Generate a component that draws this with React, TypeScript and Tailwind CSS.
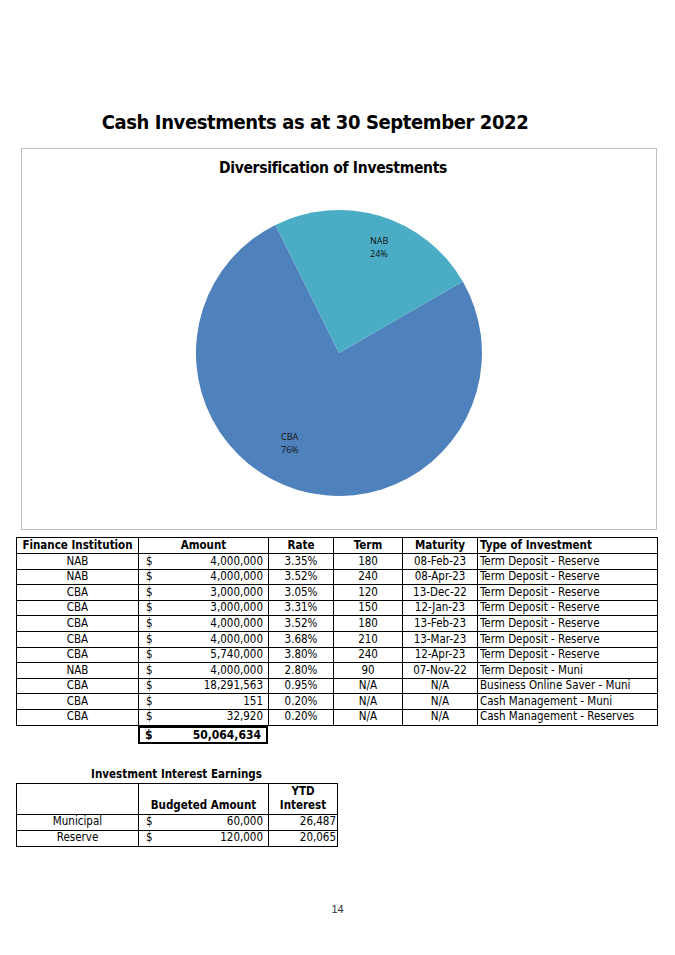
const rows = [
  ['NAB', '4,000,000', '3.35%', '180', '08-Feb-23', 'Term Deposit - Reserve'],
  ['NAB', '4,000,000', '3.52%', '240', '08-Apr-23', 'Term Deposit - Reserve'],
  ['CBA', '3,000,000', '3.05%', '120', '13-Dec-22', 'Term Deposit - Reserve'],
  ['CBA', '3,000,000', '3.31%', '150', '12-Jan-23', 'Term Deposit - Reserve'],
  ['CBA', '4,000,000', '3.52%', '180', '13-Feb-23', 'Term Deposit - Reserve'],
  ['CBA', '4,000,000', '3.68%', '210', '13-Mar-23', 'Term Deposit - Reserve'],
  ['CBA', '5,740,000', '3.80%', '240', '12-Apr-23', 'Term Deposit - Reserve'],
  ['NAB', '4,000,000', '2.80%', '90', '07-Nov-22', 'Term Deposit - Muni'],
  ['CBA', '18,291,563', '0.95%', 'N/A', 'N/A', 'Business Online Saver - Muni'],
  ['CBA', '151', '0.20%', 'N/A', 'N/A', 'Cash Management - Muni'],
  ['CBA', '32,920', '0.20%', 'N/A', 'N/A', 'Cash Management - Reserves'],
];

const earnings = [
  ['Municipal', '60,000', '26,487'],
  ['Reserve', '120,000', '20,065'],
];

const font = "font-['DejaVu_Sans_Condensed','DejaVu_Sans',sans-serif]";

function PieChart() {
  // slices measured clockwise from 12 o'clock, centre (317,164), r 143
  return (
    <svg viewBox="0 0 634 340" className="w-[634px] h-[340px] block">
      <path d="M317,164 L440.8,92.5 A143,143 0 1 1 253.4,35.9 Z" fill="#4f81bd" />
      <path d="M317,164 L253.4,35.9 A143,143 0 0 1 440.8,92.5 Z" fill="#4bacc6" />
      <g fontFamily="'Open Sans', 'Liberation Sans', sans-serif" fontSize="9" fill="#111">
        <text x="348" y="55">NAB</text>
        <text x="348" y="68">24%</text>
        <text x="259" y="251">CBA</text>
        <text x="259" y="264">76%</text>
      </g>
    </svg>
  );
}

export default function App() {
  return (
    <div className={`w-[675px] h-[955px] bg-white text-black ${font} overflow-hidden`}>
      {/* Title */}
      <div className="pt-[110px] h-[134px]">
        <h1 className="h-[24px] flex items-center justify-center pr-[45px] text-[20px] font-bold tracking-[-0.4px]">
          Cash Investments as at 30 September 2022
        </h1>
      </div>

      {/* Chart */}
      <div className="mt-[14px] ml-[21px] w-[636px] h-[382px] border border-[#bfbfbf]">
        <div className="h-[40px] flex items-center justify-center pr-[12px] text-[15.5px] font-bold tracking-[-0.3px]">
          Diversification of Investments
        </div>
        <PieChart />
      </div>

      {/* Investments table */}
      <div className="mt-[7px] ml-[16px] w-[641px]">
        <table className="table-fixed w-[641px] border-collapse border border-black text-[11.5px] leading-none">
          <colgroup>
            <col className="w-[122px]" />
            <col className="w-[130px]" />
            <col className="w-[65px]" />
            <col className="w-[69px]" />
            <col className="w-[75px]" />
            <col className="w-[180px]" />
          </colgroup>
          <thead>
            <tr className="h-[16px] font-bold">
              <th className="border border-black text-center">Finance Institution</th>
              <th className="border border-black text-center">Amount</th>
              <th className="border border-black text-center">Rate</th>
              <th className="border border-black text-center">Term</th>
              <th className="border border-black text-center">Maturity</th>
              <th className="border border-black text-left pl-[2px]">Type of Investment</th>
            </tr>
          </thead>
          <tbody>
            {rows.map((r, i) => (
              <tr key={i} className="h-[15.6px]">
                <td className="border border-black text-center">{r[0]}</td>
                <td className="border border-black">
                  <div className="flex justify-between pl-[7px] pr-[5px]">
                    <span>$</span>
                    <span>{r[1]}</span>
                  </div>
                </td>
                <td className="border border-black text-center">{r[2]}</td>
                <td className="border border-black text-center">{r[3]}</td>
                <td className="border border-black text-center">{r[4]}</td>
                <td className="border border-black text-left pl-[2px] whitespace-nowrap">{r[5]}</td>
              </tr>
            ))}
          </tbody>
        </table>
        <div className="ml-[122px] w-[130px] h-[18px] border-2 border-black flex items-center justify-between pl-[5px] pr-[5px] text-[12px] font-bold">
          <span>$</span>
          <span>50,064,634</span>
        </div>
      </div>

      {/* Interest earnings */}
      <div className="mt-[24px] ml-[16px] w-[321px]">
        <div className="h-[15px] flex items-center justify-center text-[11.5px] font-bold">
          Investment Interest Earnings
        </div>
        <table className="table-fixed w-[321px] border-collapse border border-black text-[11.5px] leading-none">
          <colgroup>
            <col className="w-[122px]" />
            <col className="w-[130px]" />
            <col className="w-[69px]" />
          </colgroup>
          <thead>
            <tr className="h-[30px] font-bold">
              <th className="border border-black" />
              <th className="border border-black align-bottom pb-[2px] text-center">Budgeted Amount</th>
              <th className="border border-black align-bottom pb-[2px] text-center leading-[14px]">
                YTD
                <br />
                Interest
              </th>
            </tr>
          </thead>
          <tbody>
            {earnings.map((r, i) => (
              <tr key={i} className="h-[16px]">
                <td className="border border-black text-center">{r[0]}</td>
                <td className="border border-black">
                  <div className="flex justify-between pl-[7px] pr-[5px]">
                    <span>$</span>
                    <span>{r[1]}</span>
                  </div>
                </td>
                <td className="border border-black text-right pr-[1px]">{r[2]}</td>
              </tr>
            ))}
          </tbody>
        </table>
      </div>

      {/* Page number */}
      <div className="mt-[56px] h-[14px] flex items-center justify-center text-[11px] text-[#333] font-['Liberation_Sans',Arial,sans-serif]">
        14
      </div>
    </div>
  );
}
